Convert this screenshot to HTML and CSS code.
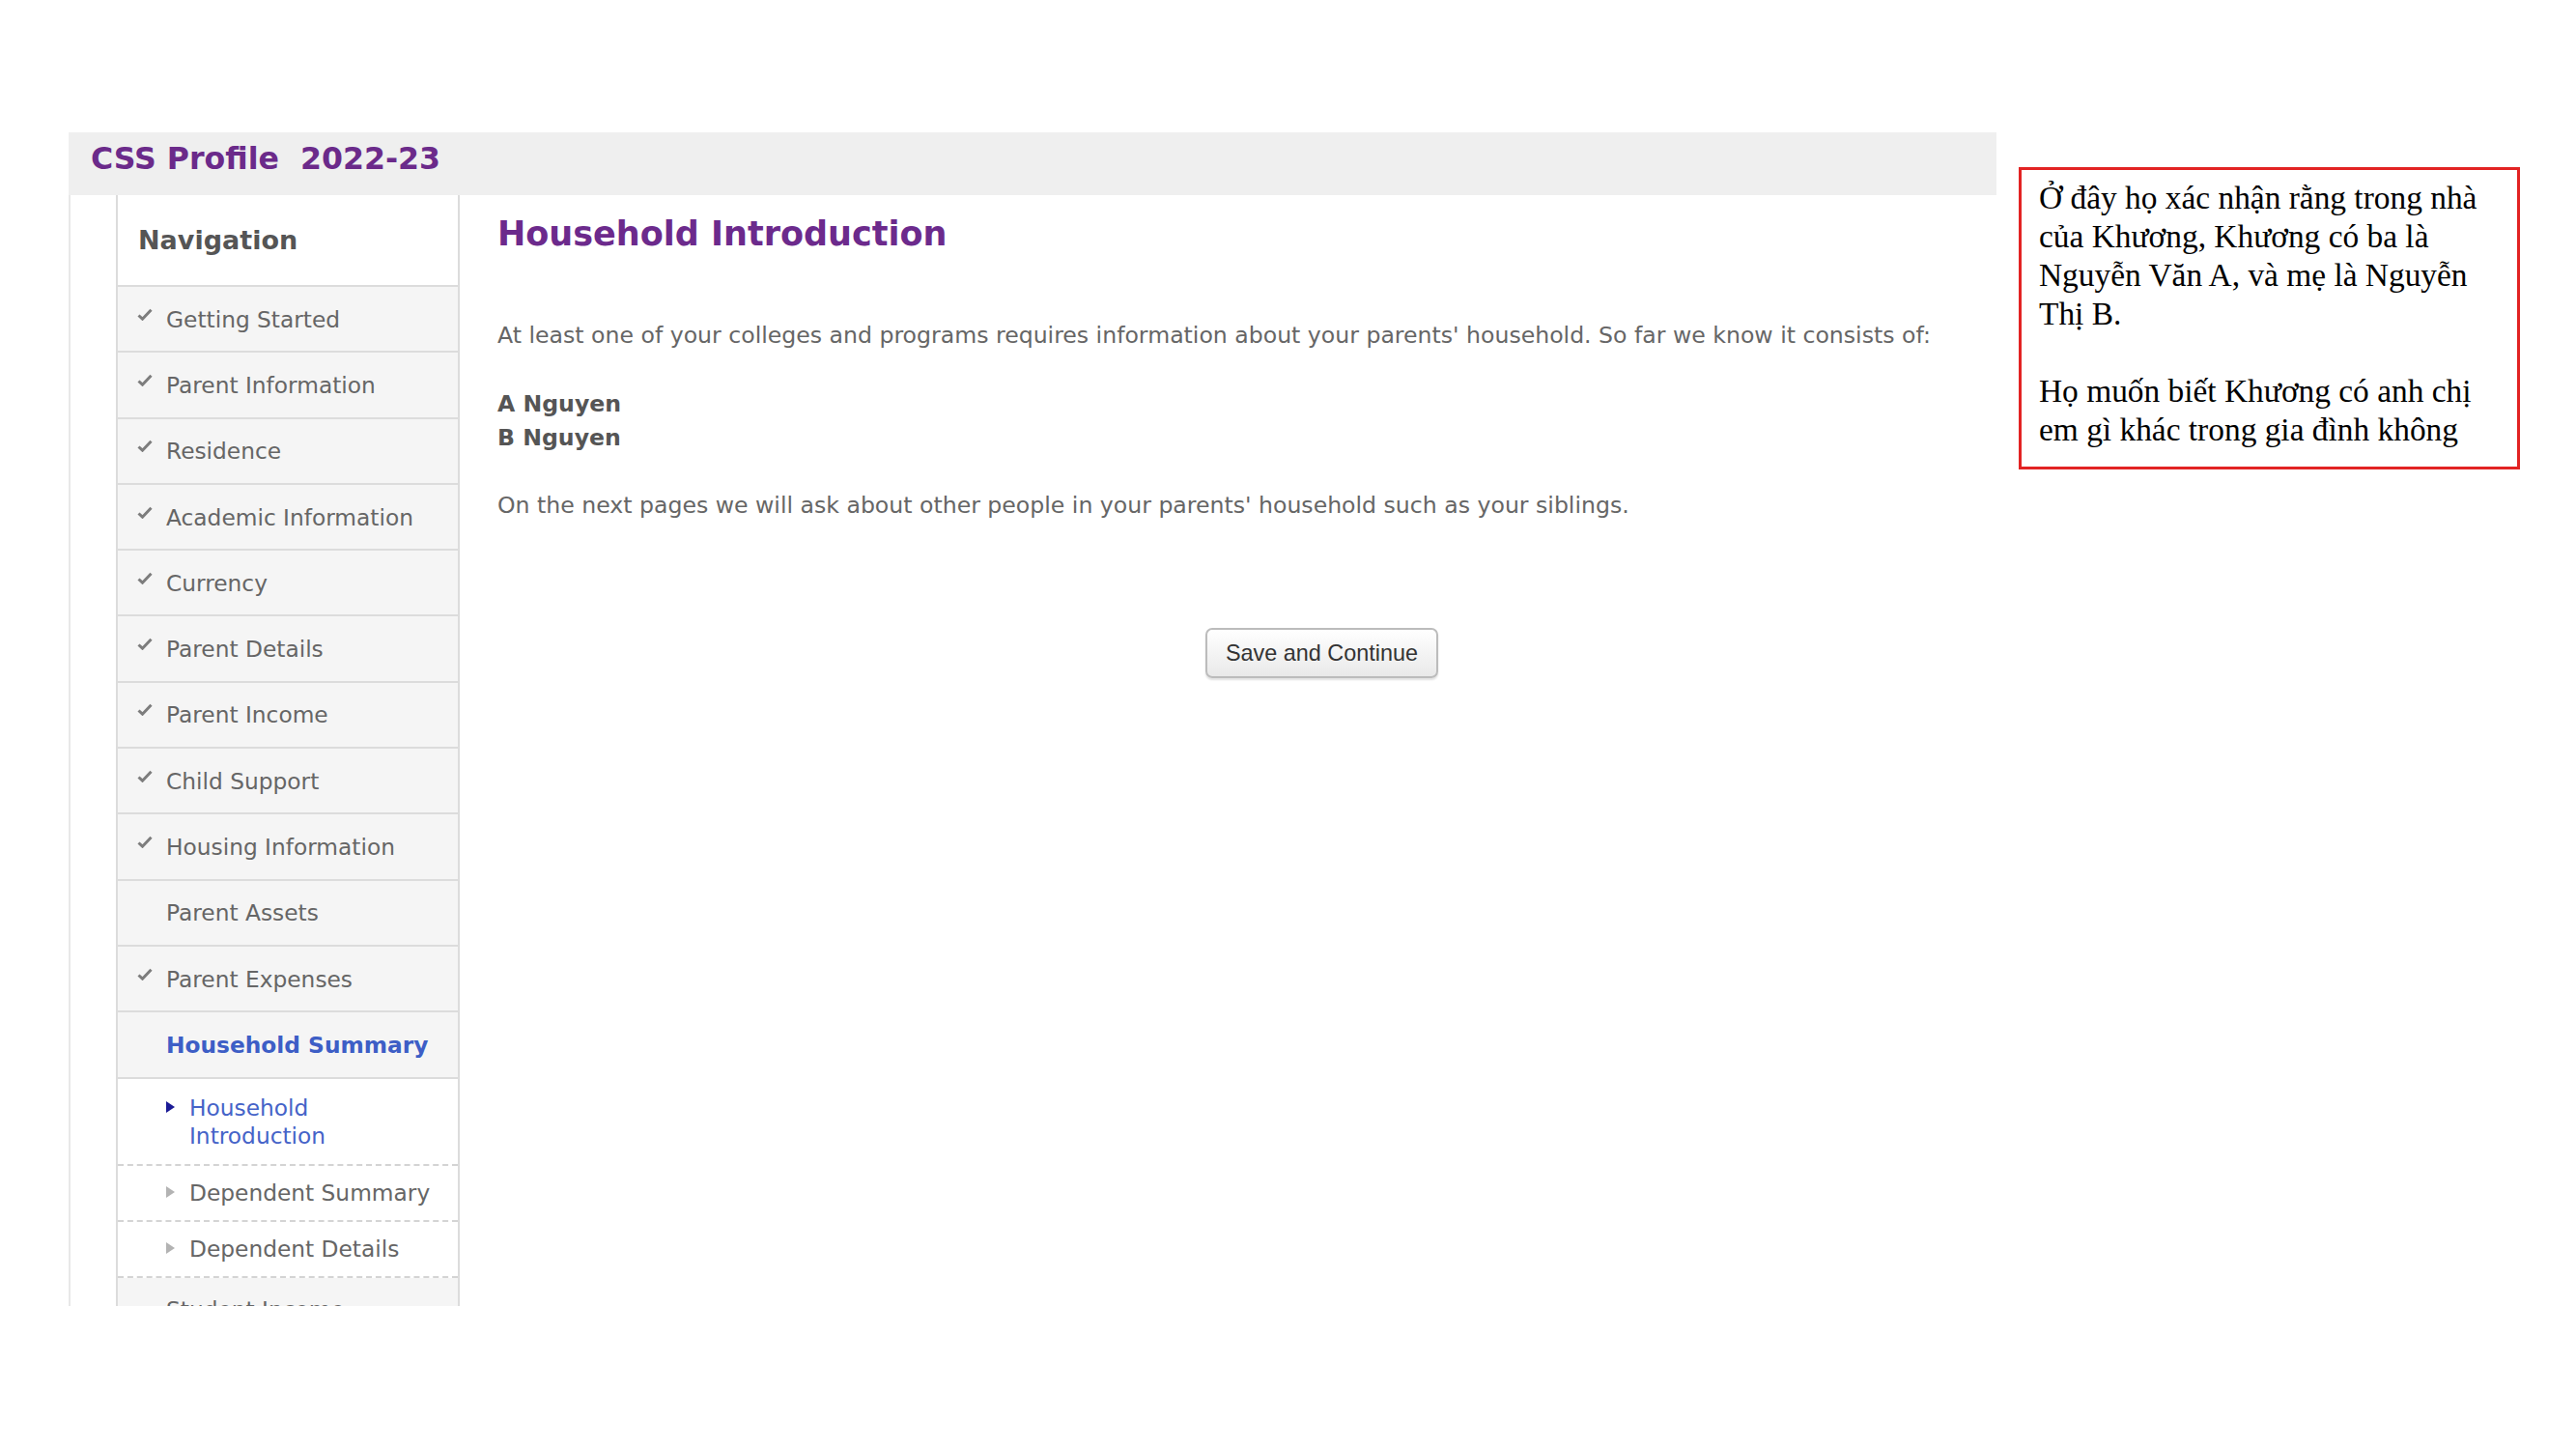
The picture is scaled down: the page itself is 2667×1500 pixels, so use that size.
FILE: index.html
```html
<!DOCTYPE html>
<html>
<head>
  <meta charset="utf-8">
  <title>CSS Profile - Household Introduction</title>
  <link rel="stylesheet" href="styles.css">
</head>
<body>
  <div class="wrap">
    <div class="profile">
      <div class="top-bar">
        <span class="brand">CSS Profile&nbsp; 2022-23</span>
      </div>

      <div class="body-area">
        <div class="nav">
          <div class="nav-title">Navigation</div>
          <ul class="nav-list">
            <li class="nav-item"><svg class="check" viewBox="0 0 16 13"><path d="M1.5 7.5 L5.5 11.2 L14.5 1.8"/></svg><span>Getting Started</span></li>
            <li class="nav-item"><svg class="check" viewBox="0 0 16 13"><path d="M1.5 7.5 L5.5 11.2 L14.5 1.8"/></svg><span>Parent Information</span></li>
            <li class="nav-item"><svg class="check" viewBox="0 0 16 13"><path d="M1.5 7.5 L5.5 11.2 L14.5 1.8"/></svg><span>Residence</span></li>
            <li class="nav-item"><svg class="check" viewBox="0 0 16 13"><path d="M1.5 7.5 L5.5 11.2 L14.5 1.8"/></svg><span>Academic Information</span></li>
            <li class="nav-item"><svg class="check" viewBox="0 0 16 13"><path d="M1.5 7.5 L5.5 11.2 L14.5 1.8"/></svg><span>Currency</span></li>
            <li class="nav-item"><svg class="check" viewBox="0 0 16 13"><path d="M1.5 7.5 L5.5 11.2 L14.5 1.8"/></svg><span>Parent Details</span></li>
            <li class="nav-item"><svg class="check" viewBox="0 0 16 13"><path d="M1.5 7.5 L5.5 11.2 L14.5 1.8"/></svg><span>Parent Income</span></li>
            <li class="nav-item"><svg class="check" viewBox="0 0 16 13"><path d="M1.5 7.5 L5.5 11.2 L14.5 1.8"/></svg><span>Child Support</span></li>
            <li class="nav-item"><svg class="check" viewBox="0 0 16 13"><path d="M1.5 7.5 L5.5 11.2 L14.5 1.8"/></svg><span>Housing Information</span></li>
            <li class="nav-item"><span class="spacer"></span><span>Parent Assets</span></li>
            <li class="nav-item"><svg class="check" viewBox="0 0 16 13"><path d="M1.5 7.5 L5.5 11.2 L14.5 1.8"/></svg><span>Parent Expenses</span></li>
            <li class="nav-item current"><span class="spacer"></span><span>Household Summary</span></li>
            <li class="sub-item active"><svg class="arrow" viewBox="0 0 9 12"><polygon points="0,0 9,6 0,12"/></svg><span>Household Introduction</span></li>
            <li class="sub-item"><svg class="arrow" viewBox="0 0 9 12"><polygon points="0,0 9,6 0,12"/></svg><span>Dependent Summary</span></li>
            <li class="sub-item"><svg class="arrow" viewBox="0 0 9 12"><polygon points="0,0 9,6 0,12"/></svg><span>Dependent Details</span></li>
            <li class="nav-item"><span class="spacer"></span><span>Student Income</span></li>
          </ul>
        </div>

        <div class="content">
          <h1>Household Introduction</h1>
          <p class="intro">At least one of your colleges and programs requires information about your parents' household. So far we know it consists of:</p>
          <div class="members">
            <div>A Nguyen</div>
            <div>B Nguyen</div>
          </div>
          <p class="next">On the next pages we will ask about other people in your parents' household such as your siblings.</p>
          <div class="actions">
            <button type="button">Save and Continue</button>
          </div>
        </div>
      </div>
    </div>

    <div class="note">
      Ở đây họ xác nhận rằng trong nhà<br>
      của Khương, Khương có ba là<br>
      Nguyễn Văn A, và mẹ là Nguyễn<br>
      Thị B.<br>
      <br>
      Họ muốn biết Khương có anh chị<br>
      em gì khác trong gia đình không
    </div>
  </div>
</body>
</html>
```

FILE: styles.css
```css
/* CSS Profile page */

body {
  margin: 0;
  background-color: #fff;
  font-family: "DejaVu Sans", Verdana, sans-serif;
}

.wrap {
  display: flex;
  align-items: flex-start;
  padding: 137px 0 0 71px;
}

.profile {
  width: 1996px;
  flex-shrink: 0;
}

.top-bar {
  height: 65px;
  box-sizing: border-box;
  background-color: #efefef;
  padding: 8px 0 0 23px;
}

.brand {
  font-size: 31.6px;
  line-height: 38px;
  font-weight: bold;
  color: #6b2a8a;
}

.body-area {
  display: flex;
  height: 1150px;
  overflow: hidden;
  border-left: 2px solid #e8e8e8;
  padding-left: 47px;
}

/* navigation column */

.nav {
  width: 356px;
  flex-shrink: 0;
  box-sizing: border-box;
  border-left: 2px solid #dcdcdc;
  border-right: 2px solid #dcdcdc;
}

.nav-title {
  height: 95px;
  box-sizing: border-box;
  padding: 31px 0 0 21px;
  font-size: 27px;
  line-height: 32px;
  font-weight: bold;
  color: #555;
  border-bottom: 2px solid #dcdcdc;
}

.nav-list {
  list-style: none;
  margin: 0;
  padding: 0;
}

.nav-item {
  display: flex;
  align-items: center;
  height: 66.3px;
  padding-left: 20px;
  background-color: #f5f5f5;
  border-bottom: 2px solid #dcdcdc;
  font-size: 23.3px;
  color: #666;
}

.check {
  width: 16px;
  height: 13px;
  flex-shrink: 0;
  margin: 0 14px 10px 0;
}

.check path {
  fill: none;
  stroke: #7d7d7d;
  stroke-width: 3;
}

.spacer {
  width: 30px;
  flex-shrink: 0;
}

.nav-item.current {
  color: #3d5ec6;
  font-weight: bold;
}

.sub-item {
  display: flex;
  align-items: flex-start;
  padding: 13.5px 22px 13.5px 50px;
  background-color: #fff;
  border-bottom: 2px dashed #d4d4d4;
  font-size: 23.3px;
  line-height: 29px;
  color: #666;
}

.sub-item.active {
  padding-top: 15px;
  padding-bottom: 15px;
  color: #4563c8;
}

.arrow {
  width: 9px;
  height: 12px;
  flex-shrink: 0;
  margin: 8px 15px 0 0;
  fill: #b3b3b3;
}

.sub-item.active .arrow {
  fill: #1b1b96;
}

/* main content */

.content {
  flex: 1;
  padding: 0 39px;
  color: #666;
  font-size: 23.6px;
  line-height: 29px;
}

.content h1 {
  margin: 19px 0 0;
  font-size: 35px;
  line-height: 42px;
  color: #6c2a8c;
}

.intro {
  margin: 70px 0 0;
}

.members {
  margin-top: 39px;
  line-height: 35px;
  font-weight: bold;
  color: #555;
}

.next {
  margin: 38px 0 0;
}

.actions {
  margin-top: 112px;
  padding-left: 194px;
  text-align: center;
}

.actions button {
  font-family: "Liberation Sans", Arial, sans-serif;
  font-size: 23.4px;
  line-height: 26px;
  color: #333;
  padding: 11px 19px;
  border: 2px solid #bcbcbc;
  border-radius: 7px;
  background: linear-gradient(#ffffff, #e9e9e9);
  box-shadow: 0 2px 2px rgba(0, 0, 0, 0.12);
  cursor: pointer;
}

/* side note */

.note {
  width: 519px;
  flex-shrink: 0;
  box-sizing: border-box;
  margin: 36px 0 0 23px;
  padding: 9px 8px 18px 18px;
  border: 3px solid #e22323;
  font-family: "Liberation Serif", "Times New Roman", serif;
  font-size: 33.4px;
  line-height: 40px;
  color: #000;
}
```
